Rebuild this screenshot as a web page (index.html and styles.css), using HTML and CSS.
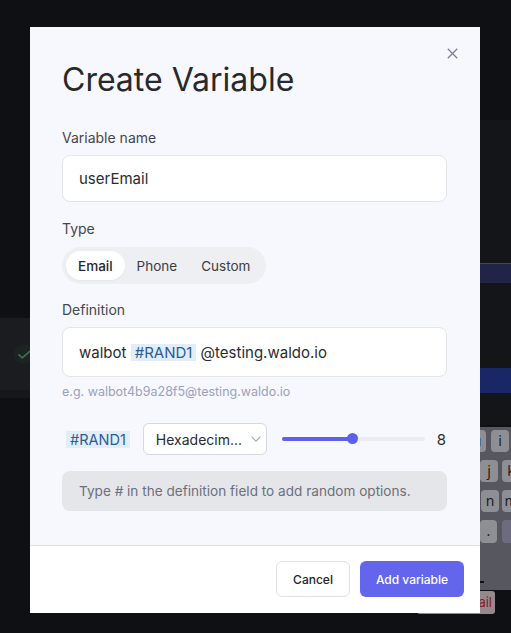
FILE: index.html
```html
<!DOCTYPE html>
<html lang="en">
<head>
<meta charset="utf-8">
<title>Create Variable</title>
<link rel="stylesheet" href="styles.css">
</head>
<body>
<div class="backdrop" aria-hidden="true">
  <div class="bg-panel-right"></div>
  <div class="bg-left-row"><span class="bg-check"><svg width="13" height="9" viewBox="0 0 13 9"><path d="M1 4.8 L4.3 7.8 L11.8 1.3" fill="none" stroke="#3a7052" stroke-width="1.7" stroke-linecap="round" stroke-linejoin="round"/></svg></span></div>
  <div class="bg-left-row2"></div>
  <div class="bg-band-purple"></div>
  <div class="bg-band-blue"></div>
  <div class="bg-keyboard">
    <div class="key k1">u</div><div class="key k2">i</div>
    <div class="key k3">h</div><div class="key k4">j</div><div class="key k5">k</div>
    <div class="key k6">b</div><div class="key k7">n</div><div class="key k8">m</div>
    <div class="key k9">.</div><div class="key k10 dark"></div>
    <div class="kb-dash"></div>
  </div>
  <div class="bg-danger">Send email</div>
</div>

<div class="modal">
  <div class="modal-body">
    <button class="close" aria-label="Close"><svg width="11" height="11" viewBox="0 0 11 11"><path d="M0.8 0.8 L10.2 10.2 M10.2 0.8 L0.8 10.2" stroke="#7b8296" stroke-width="1.3" fill="none"/></svg></button>
    <h1 class="title">Create Variable</h1>

    <div class="field">
      <label class="label">Variable name</label>
      <div class="input">userEmail</div>
    </div>

    <div class="field field-type">
      <label class="label">Type</label>
      <div class="segmented">
        <span class="seg active">Email</span>
        <span class="seg">Phone</span>
        <span class="seg">Custom</span>
      </div>
    </div>

    <div class="field field-def">
      <label class="label">Definition</label>
      <div class="input input-def">walbot <span class="chip">#RAND1</span> @testing.waldo.io</div>
      <div class="hint">e.g. walbot4b9a28f5@testing.waldo.io</div>
    </div>

    <div class="rand-row">
      <span class="chip chip-row">#RAND1</span>
      <div class="select">
        <span class="select-text">Hexadecim...</span>
        <svg class="chev" width="10" height="6" viewBox="0 0 10 6"><path d="M0.6 0.6 L5 5.2 L9.4 0.6" fill="none" stroke="#a3a7bb" stroke-width="1.1"/></svg>
      </div>
      <div class="slider">
        <div class="slider-track"><div class="slider-fill"></div></div>
        <div class="slider-thumb"></div>
      </div>
      <span class="slider-value">8</span>
    </div>

    <div class="info">Type # in the definition field to add random options.</div>
  </div>
  <div class="modal-footer">
    <button class="btn btn-cancel">Cancel</button>
    <button class="btn btn-primary">Add variable</button>
  </div>
</div>
</body>
</html>
```

FILE: styles.css
```css
* { box-sizing: border-box; }
html, body { margin: 0; }
body {
  width: 511px;
  height: 633px;
  overflow: hidden;
  background: #0f1013;
  font-family: Inter, "Noto Sans", sans-serif;
  padding: 27px 0 0 30px;
  position: relative;
}

/* ---------- backdrop (hidden app behind the overlay) ---------- */
.backdrop { position: absolute; inset: 0; overflow: hidden; }
.bg-panel-right { position: absolute; left: 470px; right: 0; top: 120px; height: 305px; background: #141519; }
.bg-left-row { position: absolute; left: 0; width: 40px; top: 318px; height: 72px; background: #1b1c20; }
.bg-left-row2 { position: absolute; left: 0; width: 40px; top: 390px; height: 8px; background: #16171b; }
.bg-check {
  position: absolute; left: 14px; top: 26px; width: 20px; height: 20px; border-radius: 50%;
  background: #1c2321; display: flex; align-items: center; justify-content: center;
}
.bg-band-purple { position: absolute; left: 470px; right: 0; top: 263px; height: 20px; background: #222446; border-top: 1px solid #3e4088; }
.bg-band-blue { position: absolute; left: 470px; right: 0; top: 368px; height: 25px; background: #1a2766; }
.bg-keyboard { position: absolute; left: 440px; right: 0; top: 427px; height: 163px; background: #57585f; }
.key {
  position: absolute; height: 22px; width: 18px; border-radius: 4px; background: #8e8f94;
  color: #1d1d21; font-size: 14px; line-height: 22px; text-align: center; font-family: "Noto Sans", sans-serif;
}
.key.dark { background: #6b6c80; }
.k1 { left: 28px; top: 3px; }
.k2 { left: 51px; top: 3px; }
.k3 { left: 18px; top: 33px; }
.k4 { left: 40px; top: 33px; }
.k5 { left: 62px; top: 33px; }
.k6 { left: 18px; top: 63px; }
.k7 { left: 41px; top: 63px; }
.k8 { left: 62px; top: 63px; }
.k9 { left: 40px; top: 93px; width: 17px; height: 23px; }
.k10 { left: 62px; top: 93px; width: 30px; height: 23px; }
.kb-dash { position: absolute; left: 40px; top: 154px; width: 4px; height: 2px; background: #111; }
.bg-danger {
  position: absolute; left: 417px; top: 591px; width: 78px; height: 23px; border-radius: 3px;
  background: #958a8b; color: #861b24; font-size: 13px; line-height: 23px; text-align: right; padding-right: 3px;
}

/* ---------- modal ---------- */
.modal {
  position: relative;
  width: 450px;
  height: 586px;
  background: #f7f8fd;
  display: flex;
  flex-direction: column;
}
.modal-body {
  position: relative;
  flex: 1;
  padding: 33px 33px 0 32px;
}
.close {
  position: absolute; top: 21px; right: 22px;
  width: 11px; height: 11px; padding: 0; border: 0; background: none; display: block;
}
.close svg { display: block; }
.title {
  margin: 0;
  font-size: 32px;
  line-height: 40px;
  font-weight: 400;
  color: #28292d;
}

.field { margin-top: 28px; }
.field-type { margin-top: 17px; }
.field-def { margin-top: 16px; }
.label {
  display: block;
  font-size: 14px;
  line-height: 20px;
  color: #45464e;
  margin-bottom: 7px;
}
.field-type .label { margin-bottom: 8px; }

.input {
  height: 47px;
  border: 1px solid #e3e5eb;
  border-radius: 8px;
  background: #fff;
  padding: 0 16px;
  display: flex;
  align-items: center;
  font-size: 15px;
  color: #2a2b30;
  white-space: pre;
}
.input-def { height: 50px; }

.chip {
  display: inline-block;
  background: #e1edf8;
  color: #2c5b9b;
  padding: 0 4px;
  line-height: 17px;
  font-size: 15px;
}

.segmented {
  display: inline-flex;
  height: 37px;
  padding: 4px;
  border-radius: 19px;
  background: #eeeff3;
}
.seg {
  display: flex;
  align-items: center;
  padding: 0 12px;
  border-radius: 15px;
  font-size: 13.5px;
  color: #3b3c42;
}
.seg.active {
  background: #fff;
  color: #26272b;
  font-weight: 500;
  box-shadow: 0 1px 2px rgba(20, 20, 40, 0.04);
}

.hint {
  margin-top: 7px;
  font-size: 12.5px;
  line-height: 16px;
  color: #9ca0bf;
}

.rand-row {
  display: flex;
  align-items: center;
  margin-top: 23px;
  height: 32px;
}
.chip-row { margin-left: 4px; font-size: 14.5px; }
.select {
  margin-left: 13px;
  width: 124px;
  height: 32px;
  border: 1px solid #d5d8de;
  border-radius: 6px;
  background: #fff;
  display: flex;
  align-items: center;
  justify-content: space-between;
  padding: 0 5px 0 12px;
  font-size: 14px;
  color: #2a2b30;
}
.chev { display: block; margin-bottom: 1px; }
.slider {
  position: relative;
  margin-left: 15px;
  width: 143px;
  height: 12px;
  display: flex;
  align-items: center;
}
.slider-track {
  width: 100%;
  height: 4px;
  border-radius: 2px;
  background: #ececf0;
}
.slider-fill {
  width: 70px;
  height: 4px;
  border-radius: 2px;
  background: #5c60ea;
}
.slider-thumb {
  position: absolute;
  left: 65px;
  top: 0;
  width: 11px;
  height: 11px;
  border-radius: 50%;
  background: #5c60ea;
}
.slider-value {
  margin-left: auto;
  margin-right: 1px;
  font-size: 15px;
  color: #2a2b30;
}

.info {
  margin-top: 16px;
  height: 40px;
  border-radius: 8px;
  background: #e5e6ea;
  display: flex;
  align-items: center;
  padding-left: 17px;
  font-size: 13.6px;
  color: #6c6f7c;
}

.modal-footer {
  height: 68px;
  background: #fff;
  border-top: 1px solid #dfe1e6;
  display: flex;
  justify-content: flex-end;
  align-items: flex-start;
  gap: 10px;
  padding: 15px 16px 0 0;
}
.btn {
  height: 36px;
  border-radius: 6px;
  font-family: Inter, "Noto Sans", sans-serif;
  font-size: 12px;
  font-weight: 500;
  padding: 0;
  cursor: pointer;
}
.btn-cancel {
  width: 74px;
  background: #fff;
  border: 1px solid #e0e2e7;
  color: #222327;
}
.btn-primary {
  width: 104px;
  background: #6366ec;
  border: 0;
  color: #fff;
}
```
